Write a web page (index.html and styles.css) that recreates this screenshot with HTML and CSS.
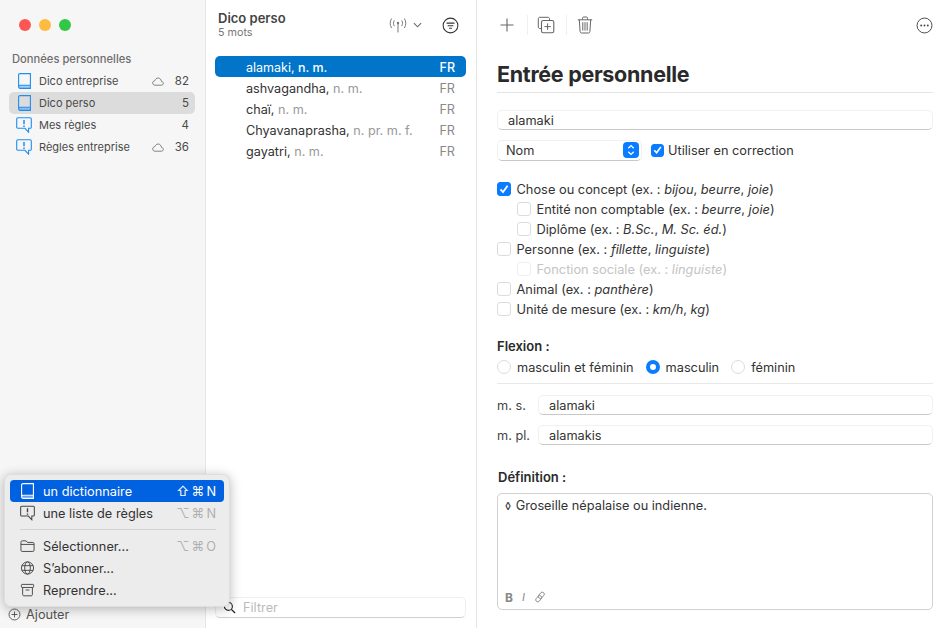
FILE: index.html
```html
<!DOCTYPE html>
<html lang="fr">
<head>
<meta charset="utf-8">
<title>Dico perso</title>
<link rel="stylesheet" href="styles.css">
</head>
<body>
<svg class="defs" width="0" height="0">
  <defs>
    <symbol id="book" viewBox="0 0 13 16"><path d="M.6 13.200V2C.6 1.200 1.200.6 2 .6H12.400V15.400H2.200C1.200 15.400 .6 14.700 .6 13.800C.6 12.900 1.200 12.200 2.200 12.200H12.400" fill="none" stroke="currentColor" stroke-width="1.100"/><path d="M1.200 12.600H12.400V15.400H2.200C1.200 15.400 .6 14.700 .6 13.800Z" fill="currentColor" fill-opacity=".4"/></symbol>
    <symbol id="rule" viewBox="0 0 16 16"><path d="M1.800.8H14.200C14.800.8 15.300 1.300 15.300 1.900V10.200C15.300 10.800 14.800 11.300 14.200 11.300H12.600V15.200L8.900 11.300H1.800C1.200 11.300 .7 10.800 .7 10.200V1.900C.7 1.300 1.200 .8 1.800 .8Z" fill="none" stroke="currentColor" stroke-width="1.100"/><path d="M8 3V7.300M8 8.500V9.900" stroke="currentColor" stroke-width="1.500"/></symbol>
    <symbol id="cloud" viewBox="0 0 12 9"><path d="M3 8.200H9.400C10.500 8.200 11.300 7.400 11.300 6.300C11.300 5.200 10.500 4.500 9.500 4.500C9.200 2.400 7.800 1 6.100 1C4.600 1 3.400 2 2.900 3.600C1.600 3.800 .7 4.700 .7 6C.7 7.300 1.700 8.200 3 8.200Z" fill="none" stroke="currentColor" stroke-width=".9"/></symbol>
  </defs>
</svg>
<div class="window">
  <aside class="sidebar">
    <div class="lights"><span class="light red"></span><span class="light yellow"></span><span class="light green"></span></div>
    <div class="side-title">Données personnelles</div>
    <ul class="side-list">
      <li class="side-row"><svg class="side-icon is-book"><use href="#book"/></svg><span class="side-name">Dico entreprise</span><svg class="cloud"><use href="#cloud"/></svg><span class="side-count">82</span></li>
      <li class="side-row is-current"><svg class="side-icon is-book"><use href="#book"/></svg><span class="side-name">Dico perso</span><span class="side-count">5</span></li>
      <li class="side-row"><svg class="side-icon is-rule"><use href="#rule"/></svg><span class="side-name">Mes règles</span><span class="side-count">4</span></li>
      <li class="side-row"><svg class="side-icon is-rule"><use href="#rule"/></svg><span class="side-name">Règles entreprise</span><svg class="cloud"><use href="#cloud"/></svg><span class="side-count">36</span></li>
    </ul>
    <div class="add-row">
      <svg class="add-icon" viewBox="0 0 14 14"><circle cx="7" cy="7" r="5.900" fill="none" stroke="#555" stroke-width="1"/><path d="M7 3.800V10.200M3.800 7H10.200" stroke="#555" stroke-width="1"/></svg>
      <span>Ajouter</span>
    </div>
  </aside>

  <section class="list-pane">
    <header class="list-head">
      <div class="list-titles">
        <div class="list-title">Dico perso</div>
        <div class="list-sub">5 mots</div>
      </div>
      <svg class="radio-icon" viewBox="0 0 20 16"><g fill="none" stroke="#777" stroke-width=".9" stroke-linecap="round"><path d="M4 1.500C2.500 4 2.500 7 4 9.500M16 1.500C17.500 4 17.500 7 16 9.500M6.500 3.200C5.600 4.800 5.600 6.200 6.500 7.800M13.500 3.200C14.400 4.800 14.400 6.200 13.500 7.800M10 6V13.500"/></g><circle cx="10" cy="5.200" r="1.100" fill="#777"/></svg>
      <svg class="chevron" viewBox="0 0 10 6"><path d="M1 1L5 5L9 1" fill="none" stroke="#666" stroke-width="1.200"/></svg>
      <svg class="filter-icon" viewBox="0 0 18 18"><circle cx="9" cy="9" r="7.800" fill="none" stroke="#333" stroke-width="1.100"/><path d="M4.800 6.500H13.200M6 9.200H12M7.500 11.900H10.500" stroke="#333" stroke-width="1.100"/></svg>
    </header>
    <ul class="words">
      <li class="word is-current"><span class="word-text"><b>alamaki,</b> <i>n. m.</i></span><span class="word-lang">FR</span></li>
      <li class="word"><span class="word-text"><b>ashvagandha,</b> <i>n. m.</i></span><span class="word-lang">FR</span></li>
      <li class="word"><span class="word-text"><b>chaï,</b> <i>n. m.</i></span><span class="word-lang">FR</span></li>
      <li class="word"><span class="word-text"><b>Chyavanaprasha,</b> <i>n. pr. m. f.</i></span><span class="word-lang">FR</span></li>
      <li class="word"><span class="word-text"><b>gayatri,</b> <i>n. m.</i></span><span class="word-lang">FR</span></li>
    </ul>
    <div class="search">
      <svg class="search-icon" viewBox="0 0 14 14"><circle cx="5.800" cy="5.800" r="4.300" fill="none" stroke="#222" stroke-width="1.200"/><path d="M9 9L13 13" stroke="#222" stroke-width="1.400"/></svg>
      <span>Filtrer</span>
    </div>
  </section>

  <main class="detail">
    <div class="toolbar">
      <svg class="tool tool-plus" viewBox="0 0 16 16"><path d="M8 1.500V14.500M1.500 8H14.500" stroke="#666" stroke-width="1.100"/></svg>
      <span class="tool-sep"></span>
      <svg class="tool tool-dup" viewBox="0 0 18 18"><path d="M4 12.500H2.800C1.900 12.500 1.300 11.900 1.300 11V2.800C1.300 1.900 1.900 1.300 2.800 1.300H11C11.900 1.300 12.500 1.900 12.500 2.800V4" fill="none" stroke="#666" stroke-width="1"/><rect x="4.500" y="4.500" width="12.300" height="12.300" rx="1.800" fill="none" stroke="#666" stroke-width="1.100"/><path d="M10.600 7.400V13.800M7.400 10.600H13.800" stroke="#666" stroke-width="1"/></svg>
      <span class="tool-sep"></span>
      <svg class="tool tool-trash" viewBox="0 0 16 18"><path d="M.8 3.800H15.200M5.500 3.500V2.200C5.500 1.500 6 1 6.700 1H9.300C10 1 10.500 1.500 10.500 2.200V3.500M2.300 3.800L3.100 15.500C3.200 16.400 3.700 17 4.600 17H11.400C12.300 17 12.800 16.400 12.900 15.500L13.700 3.800M5.800 6.200V14.600M8 6.200V14.600M10.200 6.200V14.600" fill="none" stroke="#666" stroke-width="1"/></svg>
      <svg class="tool tool-more" viewBox="0 0 18 18"><circle cx="9" cy="9" r="7.900" fill="none" stroke="#444" stroke-width="1"/><circle cx="5.500" cy="9" r="1" fill="#444"/><circle cx="9" cy="9" r="1" fill="#444"/><circle cx="12.500" cy="9" r="1" fill="#444"/></svg>
    </div>

    <h1 class="page-title">Entrée personnelle</h1>
    <div class="field field-main">alamaki</div>

    <div class="type-row">
      <div class="select">
        <span>Nom</span>
        <span class="select-btn"><svg viewBox="0 0 8 12"><path d="M1.300 4.300L4 1.600L6.700 4.300M1.300 7.700L4 10.400L6.700 7.700" fill="none" stroke="#fff" stroke-width="1.300"/></svg></span>
      </div>
      <label class="check-inline"><span class="box is-on"><svg viewBox="0 0 12 12"><path d="M2.500 6.300L5 9L9.600 2.800" fill="none" stroke="#fff" stroke-width="1.800"/></svg></span>Utiliser en correction</label>
    </div>

    <ul class="checks">
      <li class="check"><span class="box is-on"><svg viewBox="0 0 12 12"><path d="M2.500 6.300L5 9L9.600 2.800" fill="none" stroke="#fff" stroke-width="1.800"/></svg></span><span>Chose ou concept (ex. : <i>bijou</i>, <i>beurre</i>, <i>joie</i>)</span></li>
      <li class="check is-sub"><span class="box"></span><span>Entité non comptable (ex. : <i>beurre</i>, <i>joie</i>)</span></li>
      <li class="check is-sub"><span class="box"></span><span>Diplôme (ex. : <i>B.Sc.</i>, <i>M. Sc. éd.</i>)</span></li>
      <li class="check"><span class="box"></span><span>Personne (ex. : <i>fillette</i>, <i>linguiste</i>)</span></li>
      <li class="check is-sub is-off"><span class="box"></span><span>Fonction sociale (ex. : <i>linguiste</i>)</span></li>
      <li class="check"><span class="box"></span><span>Animal (ex. : <i>panthère</i>)</span></li>
      <li class="check"><span class="box"></span><span>Unité de mesure (ex. : <i>km/h</i>, <i>kg</i>)</span></li>
    </ul>

    <div class="section-label flex-label">Flexion :</div>
    <div class="radios">
      <label class="radio"><span class="dot"></span>masculin et féminin</label>
      <label class="radio"><span class="dot is-on"></span>masculin</label>
      <label class="radio"><span class="dot"></span>féminin</label>
    </div>
    <div class="forms">
      <div class="form-row"><span class="form-label">m. s.</span><div class="field">alamaki</div></div>
      <div class="form-row"><span class="form-label">m. pl.</span><div class="field">alamakis</div></div>
    </div>

    <div class="section-label def-label">Définition :</div>
    <div class="definition">
      <div class="def-text"><span class="loz">◊</span> Groseille népalaise ou indienne.</div>
      <div class="def-tools">
        <b>B</b><i>I</i>
        <svg viewBox="0 0 12 12"><g fill="none" stroke="#888" stroke-width=".9"><rect x="5.300" y=".8" width="4" height="7" rx="2" transform="rotate(40 7.300 4.300)"/><rect x="2.700" y="4.200" width="4" height="7" rx="2" transform="rotate(40 4.700 7.700)"/></g></svg>
      </div>
    </div>
  </main>

  <div class="menu">
    <div class="menu-item is-active"><svg class="menu-icon"><use href="#book"/></svg><span class="menu-text">un dictionnaire</span><span class="menu-key">⇧ ⌘ N</span></div>
    <div class="menu-item"><svg class="menu-icon"><use href="#rule"/></svg><span class="menu-text">une liste de règles</span><span class="menu-key">⌥ ⌘ N</span></div>
    <div class="menu-sep"></div>
    <div class="menu-item"><svg class="menu-icon" viewBox="0 0 16 14"><path d="M1 3V11.500C1 12.300 1.500 12.800 2.300 12.800H13.700C14.500 12.800 15 12.300 15 11.500V4.500C15 3.700 14.500 3.200 13.700 3.200H8L6.500 1.500H2.300C1.500 1.500 1 2 1 3ZM1 5.300H15" fill="none" stroke="#444" stroke-width="1"/></svg><span class="menu-text">Sélectionner...</span><span class="menu-key">⌥ ⌘ O</span></div>
    <div class="menu-item"><svg class="menu-icon" viewBox="0 0 16 16"><g fill="none" stroke="#444" stroke-width="1"><circle cx="8" cy="8" r="6.500"/><ellipse cx="8" cy="8" rx="3" ry="6.500"/><path d="M2 5.500H14M2 10.500H14"/></g></svg><span class="menu-text">S’abonner...</span></div>
    <div class="menu-item"><svg class="menu-icon" viewBox="0 0 16 16"><g fill="none" stroke="#444" stroke-width="1"><rect x="1.500" y="2" width="13" height="3.300" rx=".8"/><path d="M2.800 5.300V13C2.800 13.700 3.300 14.200 4 14.200H12C12.700 14.200 13.200 13.700 13.200 13V5.300M6 8H10"/></g></svg><span class="menu-text">Reprendre...</span></div>
  </div>
</div>
</body>
</html>
```

FILE: styles.css
```css
* { box-sizing: border-box; }
html, body { margin: 0; padding: 0; height: 100%; overflow: hidden; }
body { font-family: Inter, "Liberation Sans", sans-serif; font-size: 12.75px; color: #333; background: #fff; }
ul { list-style: none; margin: 0; padding: 0; }
.defs { position: absolute; }

.window { position: relative; display: flex; width: 945px; height: 628px; }

/* Sidebar */
.sidebar { width: 206px; flex: none; display: flex; flex-direction: column; background: #f6f6f6; border-right: 1px solid #e6e6e6; }
.lights { display: flex; gap: 8px; padding: 19px 0 0 19px; }
.light { width: 12px; height: 12px; border-radius: 50%; }
.red { background: #fc5753; }
.yellow { background: #fdbc40; }
.green { background: #33c748; }
.side-title { margin: 21px 0 0 12px; font-size: 11.2px; line-height: 14px; font-weight: 500; color: #6e6e6e; }
.side-list { margin-top: 4px; padding: 0 10px 0 9px; }
.side-row { display: flex; align-items: center; height: 22px; padding: 0 6px 0 9px; border-radius: 5px; font-size: 11px; color: #4a4a4a; }
.side-row.is-current { background: #dcdcdc; }
.side-icon { height: 16px; color: #1e8ff0; flex: none; overflow: visible; }
.side-icon.is-book { width: 13px; margin-right: 8px; }
.side-icon.is-rule { width: 16px; margin-left: -2px; margin-right: 7px; }
.side-name { flex: 1; }
.cloud { width: 12px; height: 9px; color: #777; margin-right: 11px; }
.side-count { min-width: 14px; text-align: right; font-size: 11.5px; }
.add-row { margin-top: auto; display: flex; align-items: center; gap: 5px; height: 28px; padding: 0 0 0 8px; color: #555; }
.add-icon { width: 13px; height: 13px; }

/* List */
.list-pane { width: 271px; flex: none; display: flex; flex-direction: column; border-right: 1px solid #e6e6e6; padding: 0 10px 0 9px; }
.list-head { display: flex; align-items: flex-start; height: 56px; padding: 11px 0 0 3px; }
.list-titles { flex: 1; }
.list-title { font-size: 13px; line-height: 15px; font-weight: 600; color: #444; }
.list-sub { font-size: 10.75px; line-height: 14px; color: #777; }
.radio-icon { width: 22px; height: 18px; margin-top: 6px; }
.chevron { width: 9px; height: 6px; margin: 11px 0 0 4px; }
.filter-icon { width: 17px; height: 17px; margin: 6px 7px 0 20px; }
.words { flex: 1; font-size: 12.65px; }
.word { display: flex; justify-content: space-between; align-items: center; height: 21px; padding: 1px 11px 0 31px; border-radius: 5px; color: #333; }
.word-text b { font-weight: 400; }
.word-text i { font-style: normal; color: #999; }
.word-lang { color: #8a8a8a; }
.word.is-current { background: #0175c9; color: #fff; font-size: 12.5px; font-weight: 500; }
.word.is-current .word-text i, .word.is-current .word-lang { color: #fff; }
.search { display: flex; align-items: center; gap: 7px; height: 21px; margin-bottom: 10px; padding-left: 7px; border: 1px solid #efefef; border-bottom-color: #cfcfcf; border-radius: 5px; color: #bbb; }
.search-icon { width: 13px; height: 13px; }

/* Detail */
.detail { flex: 1; min-width: 0; padding: 0 12px 0 20px; }
.toolbar { display: flex; align-items: center; height: 50px; }
.tool { flex: none; }
.tool-plus { width: 16px; height: 16px; margin-left: 2px; margin-right: 1px; }
.tool-sep { width: 1px; height: 20px; background: #f0f0f0; margin: 0 10px 0 11px; }
.tool-dup { width: 18px; height: 18px; margin-left: -1px; }
.tool-trash { width: 16px; height: 18px; }
.tool-more { width: 17px; height: 17px; margin-left: auto; }
.page-title { margin: 0; height: 43px; padding-top: 11px; font-size: 21.5px; line-height: 26px; font-weight: 700; color: #2a2a2a; letter-spacing: -.3px; border-bottom: 1px solid #e4e4e4; }
.field { flex: 1; height: 20px; line-height: 19px; padding-left: 10px; background: #fff; border: 1px solid #f0f0f0; border-bottom-color: #c8c8c8; border-radius: 5px; color: #333; }
.field-main { margin-top: 17px; }
.type-row { display: flex; align-items: center; margin-top: 10px; height: 20px; }
.select { display: flex; align-items: center; justify-content: space-between; width: 145px; height: 21px; padding: 0 2px 0 8px; border: 1px solid #f0f0f0; border-bottom-color: #c8c8c8; border-radius: 5px; }
.select-btn { display: flex; align-items: center; justify-content: center; width: 16px; height: 16px; border-radius: 4px; background: #0a7cff; }
.select-btn svg { width: 8px; height: 12px; }
.check-inline { display: flex; align-items: center; gap: 4px; margin-left: 9px; }
.box { display: flex; align-items: center; justify-content: center; width: 13px; height: 13px; flex: none; border: 1px solid #dcdcdc; border-radius: 3px; background: #fff; }
.box.is-on { background: #0a7cff; border-color: #0a7cff; }
.box svg { width: 12px; height: 12px; }
.checks { margin-top: 19px; font-size: 12.82px; }
.check { display: flex; align-items: center; gap: 5.5px; height: 20px; }
.check .box { width: 14px; height: 14px; }
.check.is-sub { padding-left: 20px; }
.check.is-off { color: #c4c4c4; }
.check.is-off .box { border-color: #efefef; }
.section-label { font-size: 13px; line-height: 16px; font-weight: 600; color: #2a2a2a; }
.flex-label { margin-top: 19px; }
.radios { display: flex; gap: 12px; height: 30px; padding-top: 5px; align-items: flex-start; border-bottom: 1px solid #e8e8e8; }
.radio { display: flex; align-items: center; gap: 6px; height: 16px; }
.dot { width: 14px; height: 14px; flex: none; border: 1px solid #dcdcdc; border-radius: 50%; background: #fff; }
.dot.is-on { border: 4px solid #0a7cff; }
.forms { display: flex; flex-direction: column; gap: 10px; margin-top: 11px; }
.form-row { display: flex; align-items: center; }
.form-label { width: 41px; flex: none; color: #444; }
.def-label { margin-top: 24px; padding-left: 1px; }
.definition { display: flex; flex-direction: column; justify-content: space-between; height: 117px; margin-top: 8px; padding: 3px 7px 5px 7px; border: 1px solid #d0d0d0; border-radius: 5px; }
.def-text { line-height: 17px; }
.loz { font-size: 11px; margin-right: 1px; }
.def-tools { display: flex; align-items: center; gap: 10px; height: 14px; font-size: 12px; color: #888; }
.def-tools i { font-size: 11px; margin-left: -1px; }
.def-tools svg { width: 12px; height: 12px; margin-left: -1px; }

/* Menu */
.menu { position: absolute; left: 4px; top: 474px; width: 226px; height: 133px; padding: 5px; background: #ececec; border: 1px solid #dedede; border-radius: 7px; box-shadow: 0 2px 12px rgba(0,0,0,.28); color: #333; }
.menu-item { display: flex; align-items: center; height: 22px; padding: 0 8px 0 10px; border-radius: 4px; }
.menu-item.is-active { background: #0062e0; color: #fff; }
.menu-icon { width: 15px; height: 16px; flex: none; color: #444; overflow: visible; }
.is-active .menu-icon { color: #fff; }
.menu-text { margin-left: 8px; flex: 1; }
.menu-key { color: #b0b0b0; font-size: 12.75px; font-family: Inter, "DejaVu Sans", sans-serif; word-spacing: -1.5px; }
.is-active .menu-key { color: #fff; }
.menu-sep { height: 1px; margin: 5px 8px 5px 10px; background: #d2d2d2; }
```
